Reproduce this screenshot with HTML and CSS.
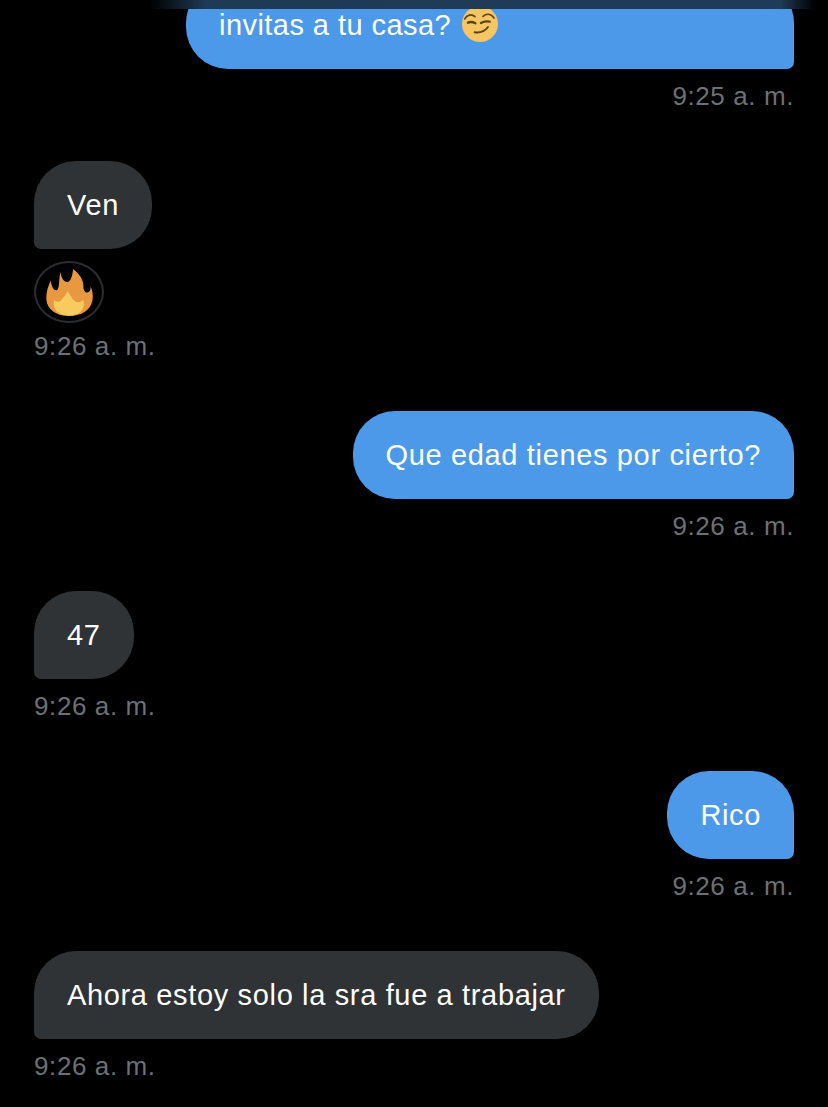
FILE: index.html
```html
<!DOCTYPE html>
<html lang="es">
<head>
  <meta charset="UTF-8">
  <title>Mensajes</title>
  <link rel="stylesheet" href="styles.css">
</head>
<body>

<div class="top-bar"></div>

<main class="chat">
  <div class="msg sent first">
    <div class="bubble">
      invitas a tu casa?
      <svg class="emoji" viewBox="22 10 108 108" aria-label="smirk">
        <circle cx="76" cy="64" r="54" fill="#f5c662"/>
        <path d="M30 49c6-12 20-17 31-7M85 41c10-9 24-9 33 5" fill="none" stroke="#5f4413" stroke-width="5" stroke-linecap="round"/>
        <path d="M40 60c7-3 15-2 22 2M79 61c8-5 17-6 26-4" fill="none" stroke="#5f4413" stroke-width="7" stroke-linecap="round"/>
        <path d="M60 89c14 2 30-3 40-16" fill="none" stroke="#5f4413" stroke-width="6" stroke-linecap="round"/>
      </svg>
    </div>
    <div class="time">9:25 a. m.</div>
  </div>

  <div class="msg received">
    <div class="bubble">Ven</div>
    <div class="reaction">
      <svg class="flame" viewBox="50 30 145 145" aria-label="fire">
        <path d="M97 42C98 55 104 72 118 72C130 70 133 50 135 33C152 46 167 65 166 86C166 102 176 108 183 102C187 98 188 92 188 86C194 100 196 115 193 130C187 158 160 175 124 175C85 175 57 156 54 125C53 105 59 85 68 68C69 85 75 99 86 97C95 92 91 60 97 42Z" fill="#e8993f"/>
        <path d="M118 100C128 112 132 125 142 132C152 136 160 132 165 127C172 142 165 174 124 174C95 174 70 158 78 126C84 134 92 134 98 128C104 120 112 112 118 100Z" fill="#f7cb60"/>
      </svg>
    </div>
    <div class="time tight">9:26 a. m.</div>
  </div>

  <div class="msg sent">
    <div class="bubble">Que edad tienes por cierto?</div>
    <div class="time">9:26 a. m.</div>
  </div>

  <div class="msg received">
    <div class="bubble">47</div>
    <div class="time">9:26 a. m.</div>
  </div>

  <div class="msg sent">
    <div class="bubble">Rico</div>
    <div class="time">9:26 a. m.</div>
  </div>

  <div class="msg received">
    <div class="bubble">Ahora estoy solo la sra fue a trabajar</div>
    <div class="time">9:26 a. m.</div>
  </div>
</main>

</body>
</html>
```

FILE: styles.css
```css
* {
  box-sizing: border-box;
  margin: 0;
  padding: 0;
}

html, body {
  height: 100%;
}

body {
  background: #000;
  color: #fff;
  font-family: 'Liberation Sans', Arial, sans-serif;
  overflow: hidden;
}

.top-bar {
  height: 9px;
  background: linear-gradient(to right, #000 150px, #1e3a55 205px, #1f3b57 780px, #000 815px);
}

.chat {
  padding: 0 34px;
  height: 1098px;
  overflow: hidden;
}

.msg {
  display: flex;
  flex-direction: column;
  margin-bottom: 48px;
}

.msg.sent {
  align-items: flex-end;
}

.msg.received {
  align-items: flex-start;
}

.msg.first {
  margin-top: -28px;
}

.bubble {
  font-size: 29px;
  line-height: 44px;
  padding: 22px 33px;
  border-radius: 42px;
  letter-spacing: 0.65px;
}

.sent .bubble {
  background: #4c99e9;
  border-bottom-right-radius: 7px;
}

.received .bubble {
  background: #2f3336;
  border-bottom-left-radius: 7px;
}

.first .bubble {
  width: 608px;
  letter-spacing: 0.45px;
}

.emoji {
  width: 36px;
  height: 36px;
  vertical-align: -7px;
  margin-left: 2px;
}

.reaction {
  width: 70px;
  height: 62px;
  margin-top: 12px;
  border: 2px solid #2a2d30;
  border-radius: 50%;
  display: flex;
  align-items: center;
  justify-content: center;
}

.flame {
  width: 48px;
  height: 48px;
}

.time {
  font-size: 26px;
  line-height: 34px;
  letter-spacing: 0.6px;
  color: #6c7175;
  margin-top: 10px;
}

.time.tight {
  margin-top: 6px;
}
```
